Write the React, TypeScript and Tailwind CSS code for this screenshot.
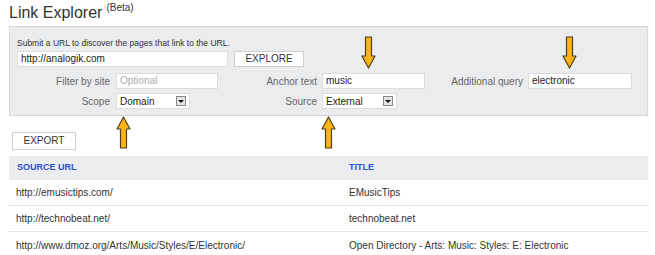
import React from 'react';

const Arrow: React.FC<{ up?: boolean; className: string }> = ({ up, className }) => (
  <svg
    width="15"
    height="33"
    viewBox="-1 -1 15 33"
    className={`absolute ${className}`}
    style={up ? { transform: 'rotate(180deg)' } : undefined}
  >
    <polygon
      points="3.5,0 9.5,0 9.5,19 13,19 6.5,31 0,19 3.5,19"
      fill="#fdb515"
      stroke="#4b4020"
      strokeWidth="1.2"
      strokeLinejoin="round"
    />
  </svg>
);

const Select: React.FC<{ value: string; w: string }> = ({ value, w }) => (
  <div className={`${w} h-[16px] bg-white border border-[#dcdcdc] flex items-center justify-between pl-[3px] pr-[3px] text-[10px] text-[#222]`}>
    <span>{value}</span>
    <span className="w-[10px] h-[10px] border border-[#8a8a8a] bg-[#e4e4e4] flex items-center justify-center">
      <span className="w-0 h-0 border-l-[3px] border-r-[3px] border-t-[3px] border-l-transparent border-r-transparent border-t-[#111]" />
    </span>
  </div>
);

const rows = [
  ['http://emusictips.com/', 'EMusicTips'],
  ['http://technobeat.net/', 'technobeat.net'],
  ['http://www.dmoz.org/Arts/Music/Styles/E/Electronic/', 'Open Directory - Arts: Music: Styles: E: Electronic'],
];

export default function App() {
  return (
    <div className="relative w-[655px] h-[255px] bg-white overflow-hidden font-['Liberation_Sans',Arial,sans-serif] text-[#333]">
      <div className="pl-[9px] pt-[4px] h-[26px] flex items-start">
        <span className="text-[16px] leading-[18px] text-[#333]">Link Explorer</span>
        <span className="text-[10px] leading-[10px] ml-[4px] mt-[-1px] text-[#333]">(Beta)</span>
      </div>

      <div className="ml-[9px] w-[639px] h-[90px] bg-[#ebecee] border border-[#d6d7d9] pt-[11px] pl-[7px]">
        <div className="text-[8.5px] leading-[11px] text-[#333]">Submit a URL to discover the pages that link to the URL.</div>
        <div className="flex mt-[2px]">
          <div className="w-[211px] h-[16px] bg-white border border-[#dcdcdc] pl-[3px] text-[10px] leading-[14px] text-[#222]">http://analogik.com</div>
          <button className="ml-[6px] w-[70px] h-[16px] bg-white border border-[#d0d0d0] text-[10px] leading-[14px] text-[#333]">EXPLORE</button>
        </div>
        <div className="flex items-center mt-[6px] text-[10px] text-[#666]">
          <div className="w-[99px] shrink-0 text-right pr-[6px]">Filter by site</div>
          <div className="w-[102px] shrink-0 h-[16px] bg-white border border-[#dcdcdc] pl-[3px] leading-[14px] text-[#aaa]">Optional</div>
          <div className="w-[104px] shrink-0 text-right pr-[5px]">Anchor text</div>
          <div className="w-[103px] shrink-0 h-[16px] bg-white border border-[#dcdcdc] pl-[3px] leading-[14px] text-[#222]">music</div>
          <div className="w-[103px] shrink-0 text-right pr-[5px]">Additional query</div>
          <div className="w-[104px] shrink-0 h-[16px] bg-white border border-[#dcdcdc] pl-[3px] leading-[14px] text-[#222]">electronic</div>
        </div>
        <div className="flex items-center mt-[4px] text-[10px] text-[#666]">
          <div className="w-[99px] shrink-0 text-right pr-[6px]">Scope</div>
          <Select value="Domain" w="w-[74px]" />
          <div className="w-[132px] shrink-0 text-right pr-[5px]">Source</div>
          <Select value="External" w="w-[75px]" />
        </div>
      </div>

      <div className="flex pl-[12px] mt-[16px]">
        <button className="w-[64px] h-[18px] bg-white border border-[#d0d0d0] text-[10px] leading-[16px] text-[#333]">EXPORT</button>
      </div>

      <div className="ml-[9px] w-[639px] mt-[6px]">
        <div className="flex h-[24px] items-center bg-[#ebecee] text-[9px] font-bold text-[#2a4fcf]">
          <div className="w-[333px] pl-[8px]">SOURCE URL</div>
          <div className="pl-[7px]">TITLE</div>
        </div>
        {rows.map(([url, title], i) => (
          <div
            key={url}
            className={`flex h-[26px] items-center text-[10px] text-[#333] ${i < rows.length - 1 ? 'border-b border-[#e6e6e6]' : ''}`}
          >
            <div className="w-[333px] pl-[7px]">{url}</div>
            <div className="pl-[7px]">{title}</div>
          </div>
        ))}
      </div>

      <Arrow className="left-[361px] top-[36px]" />
      <Arrow className="left-[562px] top-[36px]" />
      <Arrow up className="left-[116px] top-[116px]" />
      <Arrow up className="left-[321px] top-[116px]" />
    </div>
  );
}
